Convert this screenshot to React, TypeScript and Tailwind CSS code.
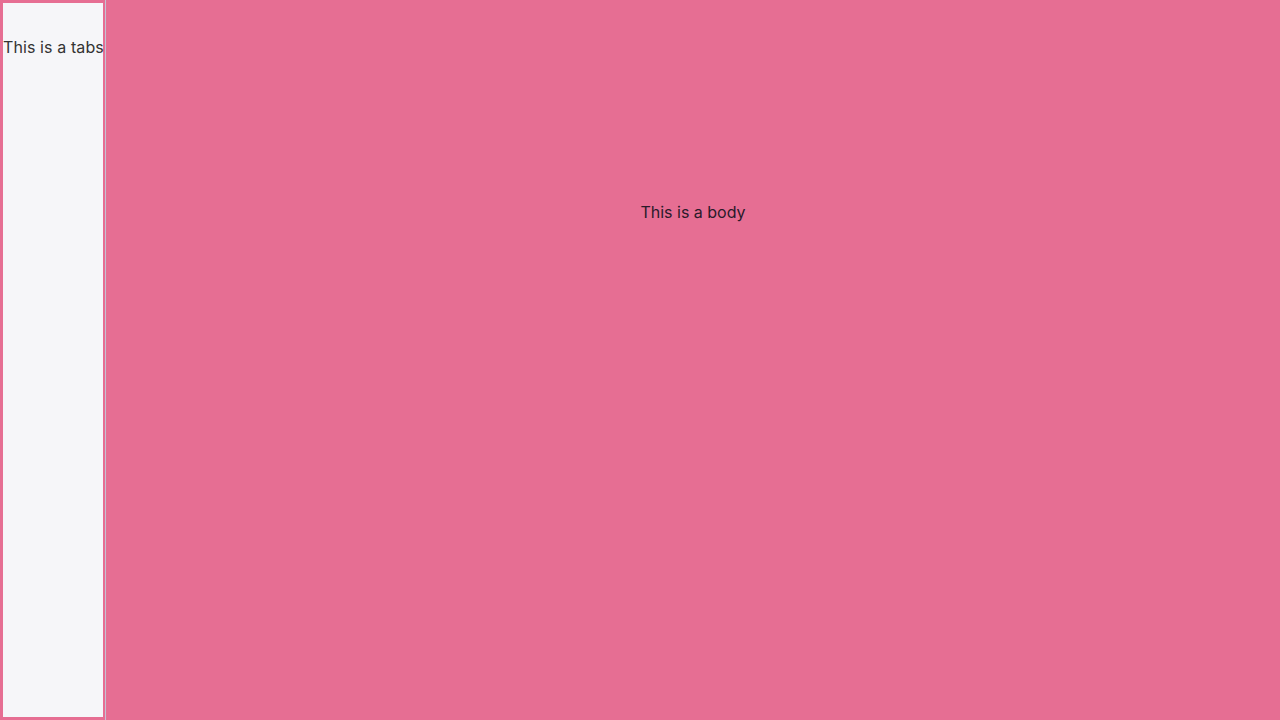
export default function App() {
  return (
    <div
      className="flex h-[720px] w-[1280px] bg-[#e66e93] text-[16px]"
      style={{ fontFamily: "Inter, 'Noto Sans', sans-serif" }}
    >
      <div className="flex p-[3px] pr-[2px]">
        <div className="w-[100px] bg-[#f6f6f9] pt-[32px] text-[#333333] leading-6 whitespace-nowrap tracking-[0.1px]">
          This is a tabs
        </div>
      </div>
      <div className="w-px bg-[#c3c3d3]" />
      <div className="flex-1 pt-[200px] text-center leading-6 text-[#2a1a2a]">
        This is a body
      </div>
    </div>
  );
}
